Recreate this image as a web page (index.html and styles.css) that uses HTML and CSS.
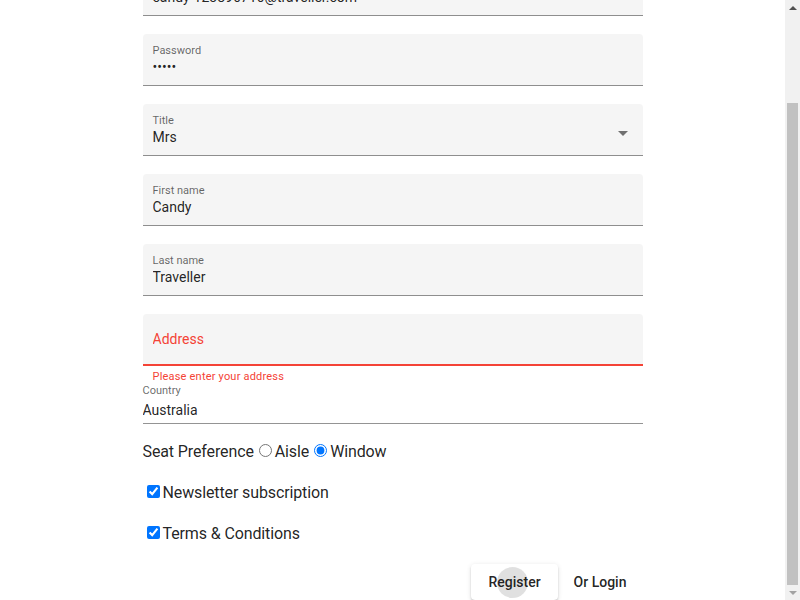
FILE: index.html
```html
<!doctype html>
<html lang="en">
<head>
  <meta charset="utf-8">
  <meta name="viewport" content="width=device-width,initial-scale=1">
  <title>Register</title>
  <link rel="stylesheet" href="styles.css">
</head>
<body>

  <div class="page">
    <h1>Register</h1>

    <form id="register">
      <div class="field">
        <label for="email">Email</label>
        <input id="email" type="email" value="candy-123896716@traveller.com">
      </div>

      <div class="field">
        <label for="password">Password</label>
        <input id="password" type="password" value="12345">
      </div>

      <div class="field select">
        <div class="select-body">
          <label>Title</label>
          <div class="select-value">Mrs</div>
        </div>
        <span class="arrow"></span>
      </div>

      <div class="field">
        <label for="firstName">First name</label>
        <input id="firstName" value="Candy">
      </div>

      <div class="field">
        <label for="lastName">Last name</label>
        <input id="lastName" value="Traveller">
      </div>

      <div class="field invalid">
        <input id="address" placeholder="Address">
      </div>
      <div class="hint">Please enter your address</div>

      <!-- plain underlined field, no fill -->
      <div class="plain-field">
        <label for="country">Country</label>
        <input id="country" value="Australia">
      </div>

      <div class="row">
        <span>Seat Preference</span><input type="radio" name="seat" id="aisle"><label for="aisle">Aisle</label><input type="radio" name="seat" id="window" checked><label for="window">Window</label>
      </div>

      <div class="row">
        <label><input type="checkbox" checked>Newsletter subscription</label>
      </div>

      <div class="row">
        <label><input type="checkbox" checked>Terms &amp; Conditions</label>
      </div>

      <div class="actions">
        <button type="submit" class="raised"><span>Register</span></button>
        <button type="button" class="text">Or Login</button>
      </div>
    </form>
  </div>

  <!-- window scrollbar (the shot is taken scrolled to the bottom) -->
  <div class="scrollbar">
    <span class="sb-arrow up"></span>
    <span class="sb-space"></span>
    <span class="sb-thumb"></span>
    <span class="sb-arrow down"></span>
  </div>

<script>
  window.scrollTo(0, document.body.scrollHeight);
</script>
</body>
</html>
```

FILE: styles.css
```css
html,body{margin:0;}
body{
  font-family:Roboto,'Liberation Sans',sans-serif;
  color:rgba(0,0,0,.87); background:#fff;
  padding-right:15px;
}
.page{max-width:500px; margin:0 auto; padding-top:8px;}
h1{margin:0 0 28px; font-size:32px; line-height:37px; font-weight:400;}

.field{
  box-sizing:border-box; height:52px; margin-bottom:18px;
  padding:10px 10px 0;
  background:#f5f5f5; border-radius:4px 4px 0 0;
  border-bottom:1px solid rgba(0,0,0,.42);
}
.field label,.plain-field label{
  display:block; font-size:11px; line-height:13px; color:rgba(0,0,0,.6);
}
.field input,.plain-field input{
  display:block; width:100%; box-sizing:border-box;
  border:none; outline:none; background:transparent; padding:0; margin:0;
  font-family:inherit; font-size:14px; line-height:20px; height:20px;
  color:rgba(0,0,0,.87);
}

.select{display:flex; align-items:center; padding-right:15px;}
.select-body{flex:1; align-self:flex-start;}
.select-value{font-size:14px; line-height:20px;}
.arrow{
  width:0; height:0; margin-top:-2px;
  border-left:5px solid transparent; border-right:5px solid transparent;
  border-top:5px solid rgba(0,0,0,.54);
}

.invalid{
  margin-bottom:0; padding-top:15px;
  border-bottom:2px solid #f44336;
}
.invalid input::placeholder{color:#f44336; opacity:1;}
.hint{
  padding:4px 10px 0; font-size:11px; line-height:14px; color:#f44336;
  letter-spacing:.2px;
}

.plain-field{border-bottom:1px solid rgba(0,0,0,.42); margin-bottom:17px;}
.plain-field input{height:26px; line-height:26px;}

.row{font-size:16px; line-height:19px; height:19px; margin-bottom:22px; letter-spacing:-.12px;}
.row input[type=radio]{margin:3px 3px 0 5px;}

.actions{display:flex; justify-content:flex-end;}
.actions button{
  font-family:inherit; font-size:14px; font-weight:500; height:36px;
  padding:0 16px; border:none; border-radius:4px; cursor:pointer;
  color:rgba(0,0,0,.87); background:transparent;
}
.actions .raised{
  position:relative; background:#fff; padding:0 17px;
  box-shadow:0 3px 1px -2px rgba(0,0,0,.2),0 2px 2px 0 rgba(0,0,0,.14),0 1px 5px 0 rgba(0,0,0,.12);
}
/* focus ripple left on the button */
.raised::after{
  content:''; position:absolute; left:26px; top:3px;
  width:31px; height:31px; border-radius:50%; background:rgba(0,0,0,.12);
}
.raised span{position:relative; z-index:1;}

.scrollbar{
  position:fixed; top:0; right:0; bottom:0; width:15px;
  background:#f1f1f1; display:flex; flex-direction:column; align-items:center;
}
.sb-arrow{height:15px; width:15px; display:flex; justify-content:center; align-items:center;}
.sb-arrow::before{
  content:''; width:0; height:0;
  border-left:4px solid transparent; border-right:4px solid transparent;
}
.up::before{border-bottom:4px solid #505050;}
.down::before{border-top:4px solid #a3a3a3;}
.sb-space{flex:1;}
.sb-thumb{width:11px; height:482px; background:#c1c1c1;}
```
